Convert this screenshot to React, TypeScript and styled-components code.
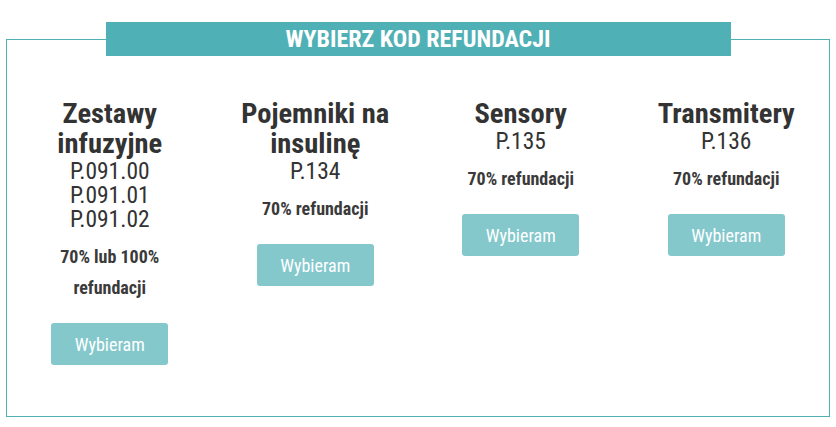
import styled, { createGlobalStyle } from 'styled-components';

interface Refund {
    title: string[];
    codes: string[];
    info: string[];
}

const refunds: Refund[] = [
    {
        title: ['Zestawy', 'infuzyjne'],
        codes: ['P.091.00', 'P.091.01', 'P.091.02'],
        info: ['70% lub 100%', 'refundacji'],
    },
    {
        title: ['Pojemniki na', 'insulinę'],
        codes: ['P.134'],
        info: ['70% refundacji'],
    },
    {
        title: ['Sensory'],
        codes: ['P.135'],
        info: ['70% refundacji'],
    },
    {
        title: ['Transmitery'],
        codes: ['P.136'],
        info: ['70% refundacji'],
    },
];

const App = () => {
    return (
        <>
            <GlobalStyle />
            <StyledPage>
                <StyledFrame>
                    <StyledBanner>Wybierz kod refundacji</StyledBanner>
                    <StyledGrid>
                        {refunds.map((item) => (
                            <StyledColumn key={item.codes[0]}>
                                <StyledTitle>
                                    {item.title.map((line) => (
                                        <span key={line}>{line}</span>
                                    ))}
                                </StyledTitle>
                                <StyledCodes>
                                    {item.codes.map((code) => (
                                        <span key={code}>{code}</span>
                                    ))}
                                </StyledCodes>
                                <StyledInfo>
                                    {item.info.map((line) => (
                                        <span key={line}>{line}</span>
                                    ))}
                                </StyledInfo>
                                <StyledButton type="button">Wybieram</StyledButton>
                            </StyledColumn>
                        ))}
                    </StyledGrid>
                </StyledFrame>
            </StyledPage>
        </>
    );
};

const GlobalStyle = createGlobalStyle`
    body {
        margin: 0;
        background: #fff;
        font-family: "Roboto Condensed", Roboto, sans-serif;
        font-stretch: 75%;
        color: #333;
    }
`;

const StyledPage = styled.div`
    padding: 22px 6px 0 6px;
    width: 836px;
    box-sizing: border-box;
`;

const StyledFrame = styled.div`
    margin-top: 17px;
    height: 378px;
    box-sizing: border-box;
    border: 1px solid #4fb0b5;
    display: flex;
    flex-direction: column;
    align-items: center;
`;

const StyledBanner = styled.h2`
    margin: -18px 0 0 0;
    width: 625px;
    height: 34px;
    box-sizing: border-box;
    background: #4fb0b5;
    color: #fff;
    text-transform: uppercase;
    font-size: 24px;
    font-weight: 700;
    line-height: 34px;
    text-align: center;
`;

const StyledGrid = styled.div`
    display: grid;
    grid-template-columns: repeat(4, 1fr);
    align-items: start;
    width: 100%;
    margin-top: 43px;
`;

const StyledColumn = styled.div`
    display: flex;
    flex-direction: column;
    align-items: center;
    text-align: center;
`;

const StyledTitle = styled.h3`
    margin: 0;
    display: flex;
    flex-direction: column;
    font-size: 28.5px;
    line-height: 30px;
    font-weight: 700;
    color: #333;
`;

const StyledCodes = styled.div`
    display: flex;
    flex-direction: column;
    font-size: 23.5px;
    line-height: 24px;
    font-weight: 400;
    color: #333;
`;

const StyledInfo = styled.p`
    margin: 10px 0 0 0;
    display: flex;
    flex-direction: column;
    font-size: 18px;
    line-height: 31px;
    font-weight: 700;
    color: #3a3a3a;
`;

const StyledButton = styled.button`
    margin-top: 20px;
    width: 117px;
    height: 42px;
    border: none;
    border-radius: 3px;
    background: #84c8cc;
    color: #fff;
    font-family: inherit;
    font-stretch: inherit;
    font-size: 18px;
    cursor: pointer;
`;

export default App;
